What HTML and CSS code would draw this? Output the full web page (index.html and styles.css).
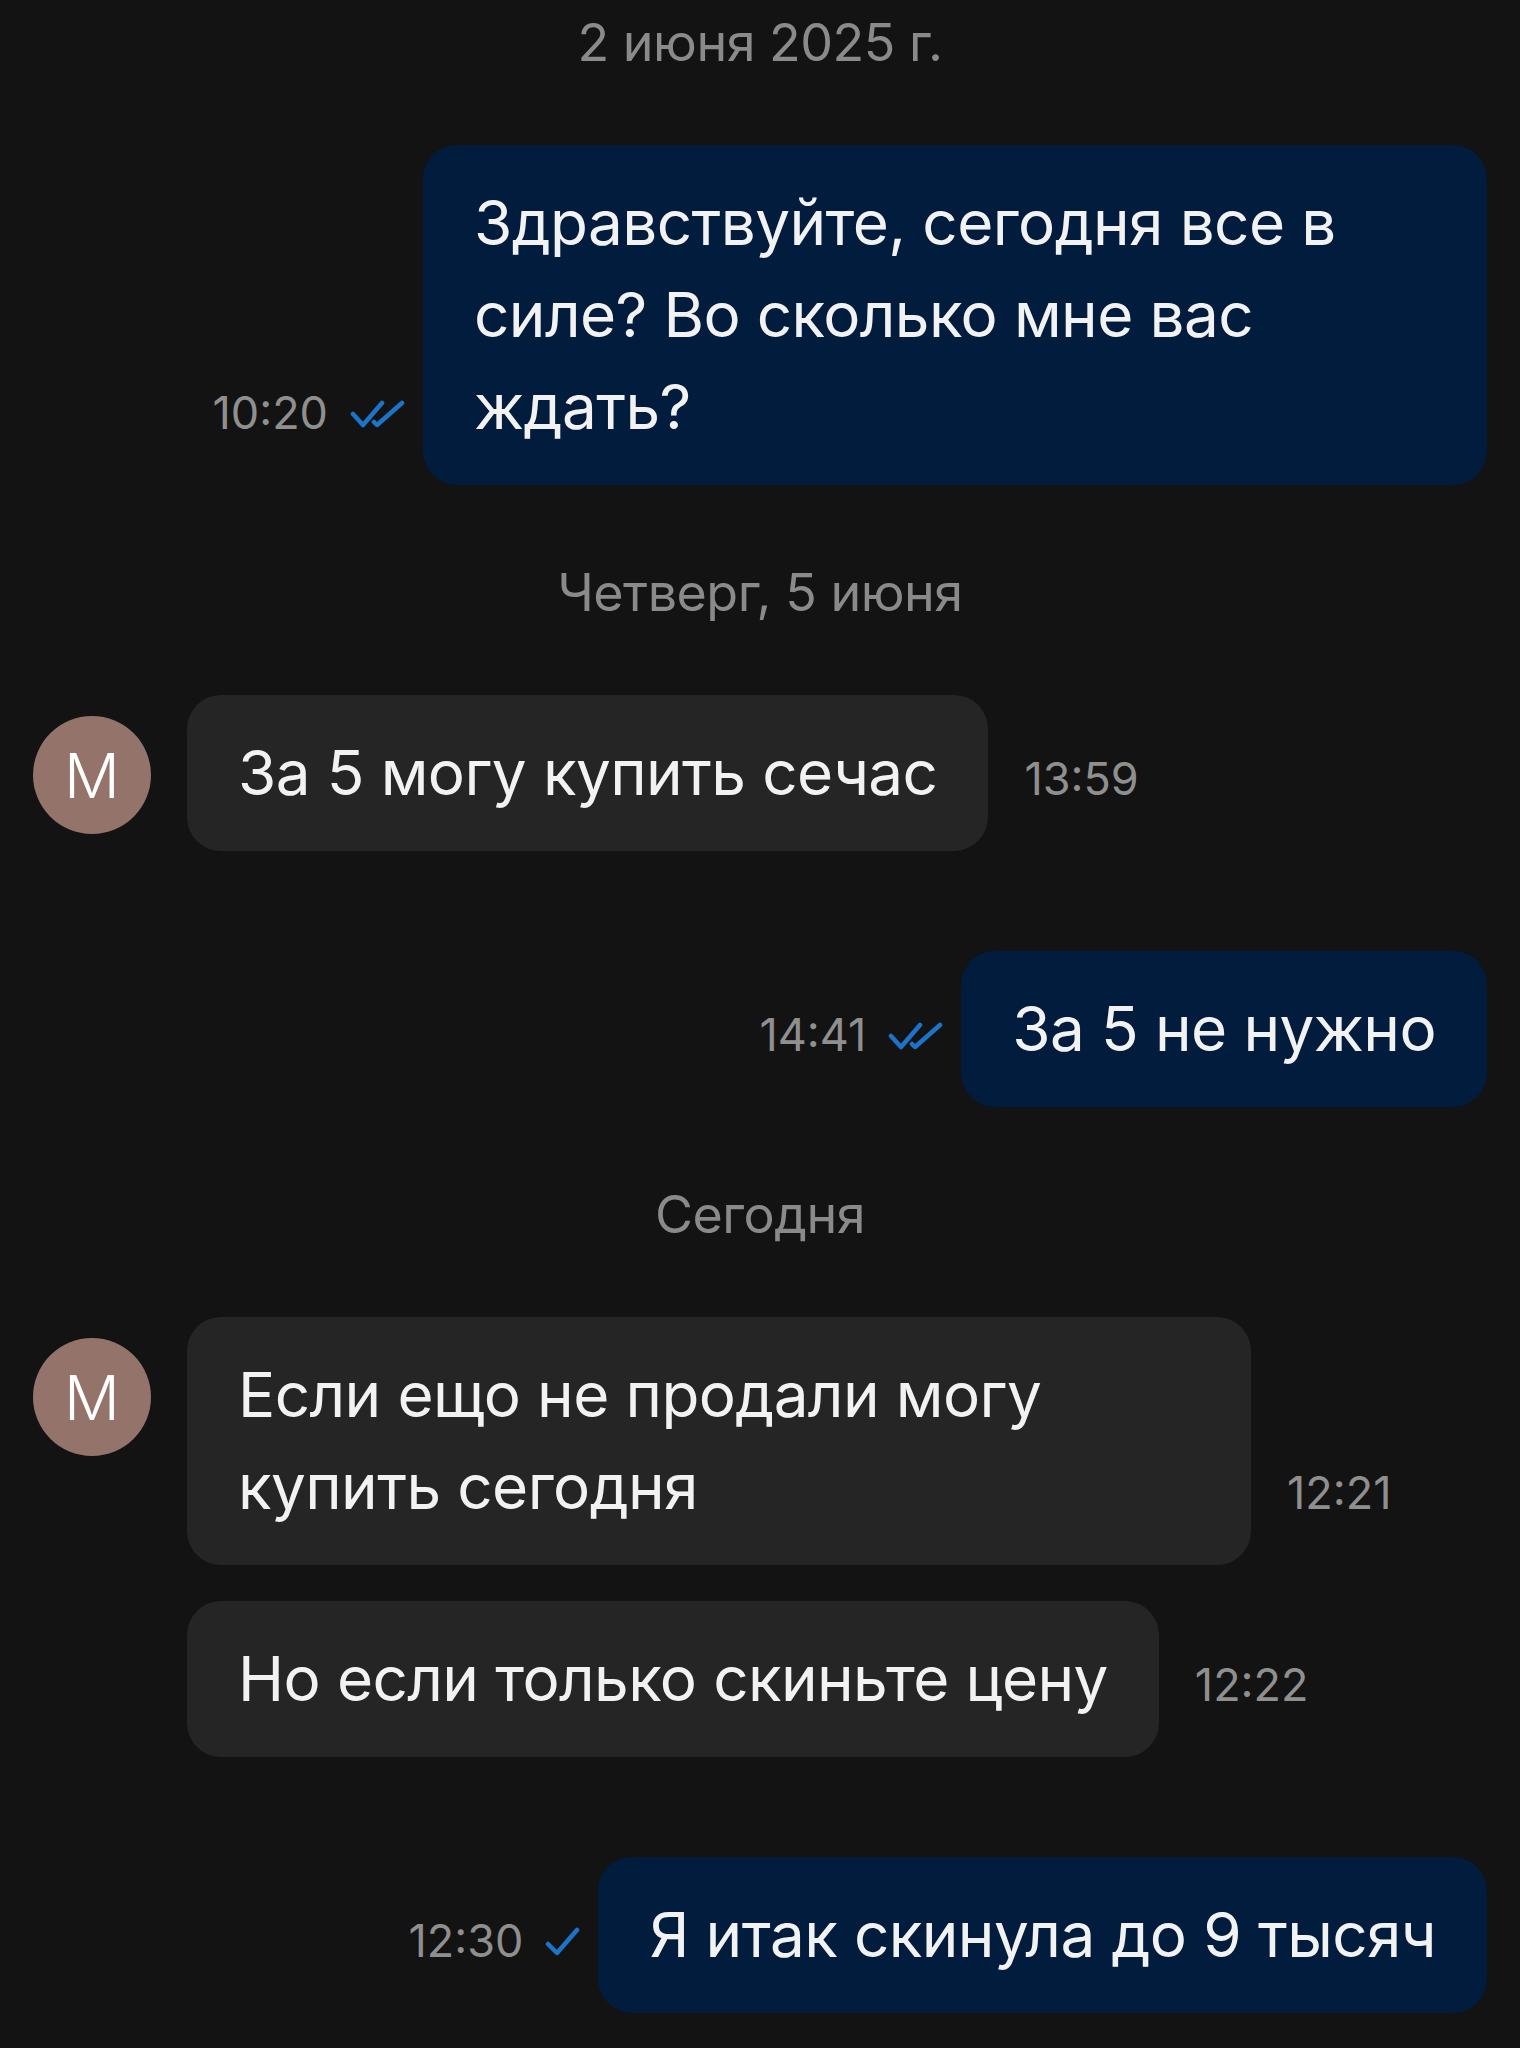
FILE: index.html
```html
<!DOCTYPE html>
<html lang="ru">
<head>
<meta charset="UTF-8">
<meta name="viewport" content="width=device-width, initial-scale=1.0">
<title>Чат</title>
<link rel="stylesheet" href="styles.css">
</head>
<body>
<div class="chat">

  <div class="day">2 июня 2025 г.</div>

  <div class="row out">
    <div class="meta">
      <span class="time">10:20</span>
      <svg class="check double" viewBox="0 0 56 30"><path d="M3 15 L13 26 L32 4 M24 23 L27 26 L52 4"/></svg>
    </div>
    <div class="bubble">Здравствуйте, сегодня все в силе? Во сколько мне вас ждать?</div>
  </div>

  <div class="day">Четверг, 5 июня</div>

  <div class="group">
    <div class="avatar">M</div>
    <div class="msgs">
      <div class="row in">
        <div class="bubble">За 5 могу купить сечас</div>
        <div class="meta"><span class="time">13:59</span></div>
      </div>
    </div>
  </div>

  <div class="row out">
    <div class="meta">
      <span class="time">14:41</span>
      <svg class="check double" viewBox="0 0 56 30"><path d="M3 15 L13 26 L32 4 M24 23 L27 26 L52 4"/></svg>
    </div>
    <div class="bubble">За 5 не нужно</div>
  </div>

  <div class="day">Сегодня</div>

  <div class="group">
    <div class="avatar">M</div>
    <div class="msgs">
      <div class="row in">
        <div class="bubble">Если ещо не продали могу купить сегодня</div>
        <div class="meta"><span class="time">12:21</span></div>
      </div>
      <div class="row in">
        <div class="bubble">Но если только скиньте цену</div>
        <div class="meta"><span class="time">12:22</span></div>
      </div>
    </div>
  </div>

  <div class="row out">
    <div class="meta">
      <span class="time">12:30</span>
      <svg class="check single" viewBox="0 0 36 30"><path d="M3 17 L12 26 L32 3"/></svg>
    </div>
    <div class="bubble">Я итак скинула до 9 тысяч</div>
  </div>

</div>
</body>
</html>
```

FILE: styles.css
```css
body {
  margin: 0;
  padding: 0;
  background: #131313;
  color: #f2f2f2;
  font-family: Inter, "Noto Sans", sans-serif;
}

.chat {
  display: flex;
  flex-direction: column;
  padding: 15px 33px 40px;
}

.day {
  text-align: center;
  color: #8a8a8a;
  font-size: 52px;
  line-height: 56px;
  letter-spacing: -0.5px;
  margin: 80px 0 74px;
}

.day:first-child {
  margin-top: 0;
}

.row {
  display: flex;
  align-items: last baseline;
}

.chat > .row + .group,
.chat > .group + .row,
.chat > .row + .row {
  margin-top: 100px;
}

.row.out {
  justify-content: flex-end;
}

.bubble {
  max-width: 962px;
  padding: 32px 51px;
  border-radius: 34px;
  font-size: 62px;
  line-height: 92px;
  letter-spacing: -0.6px;
  background: #252525;
}

.out .bubble {
  background: #011c3c;
}

.meta {
  display: flex;
  align-items: baseline;
  gap: 22px;
}

.out .meta {
  margin-right: 17px;
}

.in .meta {
  margin-left: 36px;
}

.time {
  color: #8f8f8f;
  font-size: 45px;
}

.check {
  height: 30px;
  fill: none;
  stroke: #1b74c9;
  stroke-width: 4.5;
  stroke-linecap: round;
  stroke-linejoin: round;
}

.check.double {
  width: 56px;
}

.check.single {
  width: 36px;
}

.group {
  display: flex;
  align-items: flex-start;
  gap: 36px;
}

.avatar {
  width: 118px;
  height: 118px;
  margin-top: 21px;
  border-radius: 50%;
  background: #94746a;
  color: #fff;
  font-size: 62px;
  font-weight: 300;
  display: flex;
  align-items: center;
  justify-content: center;
  flex-shrink: 0;
}

.msgs {
  display: flex;
  flex-direction: column;
  gap: 36px;
}
```
